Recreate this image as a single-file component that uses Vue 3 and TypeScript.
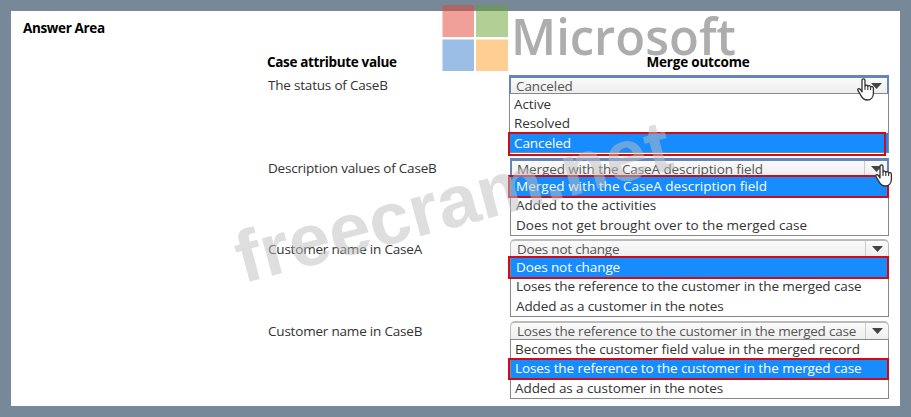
<script setup lang="ts">
interface Question {
  id: string
  label: string
  value: string
  options: string[]
  focused?: boolean
}

const questions: Question[] = [
  {
    id: 'status',
    label: 'The status of CaseB',
    value: 'Canceled',
    options: ['Active', 'Resolved', 'Canceled'],
    focused: true,
  },
  {
    id: 'description',
    label: 'Description values of CaseB',
    value: 'Merged with the CaseA description field',
    options: [
      'Merged with the CaseA description field',
      'Added to the activities',
      'Does not get brought over to the merged case',
    ],
    focused: true,
  },
  {
    id: 'name-a',
    label: 'Customer name in CaseA',
    value: 'Does not change',
    options: [
      'Does not change',
      'Loses the reference to the customer in the merged case',
      'Added as a customer in the notes',
    ],
  },
  {
    id: 'name-b',
    label: 'Customer name in CaseB',
    value: 'Loses the reference to the customer in the merged case',
    options: [
      'Becomes the customer field value in the merged record',
      'Loses the reference to the customer in the merged case',
      'Added as a customer in the notes',
    ],
  },
]
</script>

<template>
  <div class="frame">
    <main class="sheet">
      <h1 class="title">Answer Area</h1>

      <div class="columns">
        <h2>Case attribute value</h2>
        <h2 class="outcome">Merge outcome</h2>
      </div>

      <div
        v-for="q in questions"
        :key="q.id"
        class="row"
        :class="q.id"
      >
        <div class="label">{{ q.label }}</div>
        <div class="dropdown">
          <div
            class="select"
            :class="{ focused: q.focused }"
          >
            <span class="value">{{ q.value }}</span>
            <span class="arrow">
              <svg width="11" height="6" viewBox="0 0 11 6"><path d="M0 0h11L5.5 6z" fill="#444" /></svg>
            </span>
          </div>
          <ul class="list">
            <li
              v-for="option in q.options"
              :key="option"
              :class="{ picked: option === q.value }"
            >{{ option }}</li>
          </ul>
          <!-- Hand cursor -->
          <svg
            v-if="q.focused"
            class="hand"
            width="18"
            height="23"
            viewBox="0 0 18 23"
          >
            <path
              d="M5 14V2.6C5 .2 8 .2 8 2.6V8c.5-1.4 2.6-1.2 2.8.4.6-1.2 2.6-.9 2.8.7.7-.9 2.8-.6 2.8 1.3V15c0 4-2.4 7-6.2 7-3.5 0-5-2-6.2-4.4L1 12.7c-.9-1.7 1-2.7 2.1-1.5z"
              fill="#fff"
              stroke="#333"
              stroke-width="1.3"
              stroke-linejoin="round"
            />
            <path d="M8 8v4M10.8 8.4V12M13.6 9.3V12" fill="none" stroke="#333" stroke-width="1.1" />
          </svg>
        </div>
      </div>
    </main>

    <!-- Logo and watermark -->
    <svg class="overlay" width="911" height="417" viewBox="0 0 911 417">
      <g opacity="0.5">
        <rect x="442.5" y="5" width="31.5" height="32" fill="#e34335" />
        <rect x="476" y="5" width="32" height="32" fill="#67a32f" />
        <rect x="442.5" y="39.5" width="31.5" height="31.5" fill="#377fcd" />
        <rect x="476" y="39.5" width="32" height="31.5" fill="#ff9f29" />
      </g>
      <text x="511" y="54.5" class="brand" textLength="225" lengthAdjust="spacingAndGlyphs">Microsoft</text>
      <text
        class="watermark"
        transform="translate(243 283.500) rotate(-14.9)"
        textLength="448"
        lengthAdjust="spacingAndGlyphs"
      >freecram.net</text>
    </svg>
  </div>
</template>

<style>
body {
  margin: 0;
  overflow: hidden;
}
</style>

<style scoped>
.frame {
  box-sizing: border-box;
  position: relative;
  width: 911px;
  height: 417px;
  padding: 11px;
  background: #778899;
  font-family: 'Open Sans', 'Noto Sans', sans-serif;
  font-size: 13.5px;
  letter-spacing: -0.2px;
  color: #333;
}

.sheet {
  display: grid;
  grid-template-rows: 39px 25px 83px 81px 82px 85px;
  height: 395px;
  background: #fff;
}

h1,
h2 {
  margin: 0;
  font-size: 13.5px;
  font-weight: 700;
  letter-spacing: -0.35px;
  line-height: 20px;
  color: #000;
}

h2.outcome {
  letter-spacing: -0.2px;
}

.title {
  padding: 7px 0 0 12px;
}

.columns {
  display: grid;
  grid-template-columns: 242px 378px;
  padding: 2px 0 0 256px;
}

.outcome {
  text-align: center;
}

.row {
  display: grid;
  grid-template-columns: 241px 380px;
  padding-left: 257px;
}

.label {
  line-height: 20px;
}

.dropdown {
  position: relative;
  padding-left: 1px;
}

.status .dropdown {
  margin-left: -1px;
}

.select {
  box-sizing: border-box;
  display: flex;
  justify-content: space-between;
  height: 18px;
  border: 1px solid #bbb;
  border-top-width: 2px;
  border-bottom: 0;
  border-radius: 5px 5px 0 0;
  background: linear-gradient(#fafafa, #eee);
  color: #555;
  overflow: hidden;
}

.select.focused {
  border-width: 3px 2px 0;
  border-color: #6684b8;
  border-radius: 0;
}

.value {
  padding-left: 6px;
  line-height: 17px;
  letter-spacing: -0.22px;
}

.focused .value {
  padding-left: 5px;
  line-height: 16px;
  letter-spacing: -0.1px;
}

.arrow {
  display: flex;
  align-items: center;
  justify-content: center;
  width: 22px;
  border-left: 1px solid #ccc;
}

.status .arrow {
  border-left-color: #eee;
}

.list {
  box-sizing: border-box;
  margin: 0;
  padding: 0;
  list-style: none;
  border: 1px solid #888;
  background: #fff;
  letter-spacing: -0.08px;
}

.list li {
  height: 19.3px;
  padding-left: 4px;
  line-height: 20px;
}

.description .list {
  letter-spacing: 0.03px;
}

.description .list li,
.name-a .list li {
  padding-left: 5px;
  line-height: 19.5px;
}

.name-a .list {
  letter-spacing: -0.1px;
}

.name-b .list li {
  line-height: 19px;
}

.list .picked {
  position: relative;
  background: #168cff;
  color: #fff;
}

.list .picked::after {
  content: '';
  position: absolute;
  inset: -1px -1px -1px -3px;
  border: 2px solid #cc0c18;
}

.status .list .picked::after {
  inset: -1px 2px -4px -2px;
}

.description .list .picked::after,
.name-a .list .picked::after {
  inset: -2px -1px -2px -3px;
}

.hand {
  position: absolute;
  top: 3px;
  right: 14px;
}

.description .hand {
  top: 6px;
  right: -4px;
}

.overlay {
  position: absolute;
  inset: 0;
  pointer-events: none;
}

.brand {
  font-size: 50.5px;
  font-weight: 600;
  letter-spacing: 0;
  fill: #adadad;
}

.watermark {
  font-family: 'Liberation Sans', Arial, sans-serif;
  font-size: 73px;
  font-weight: 700;
  letter-spacing: 0;
  fill: #bdbdbd;
  fill-opacity: 0.5;
}
</style>
